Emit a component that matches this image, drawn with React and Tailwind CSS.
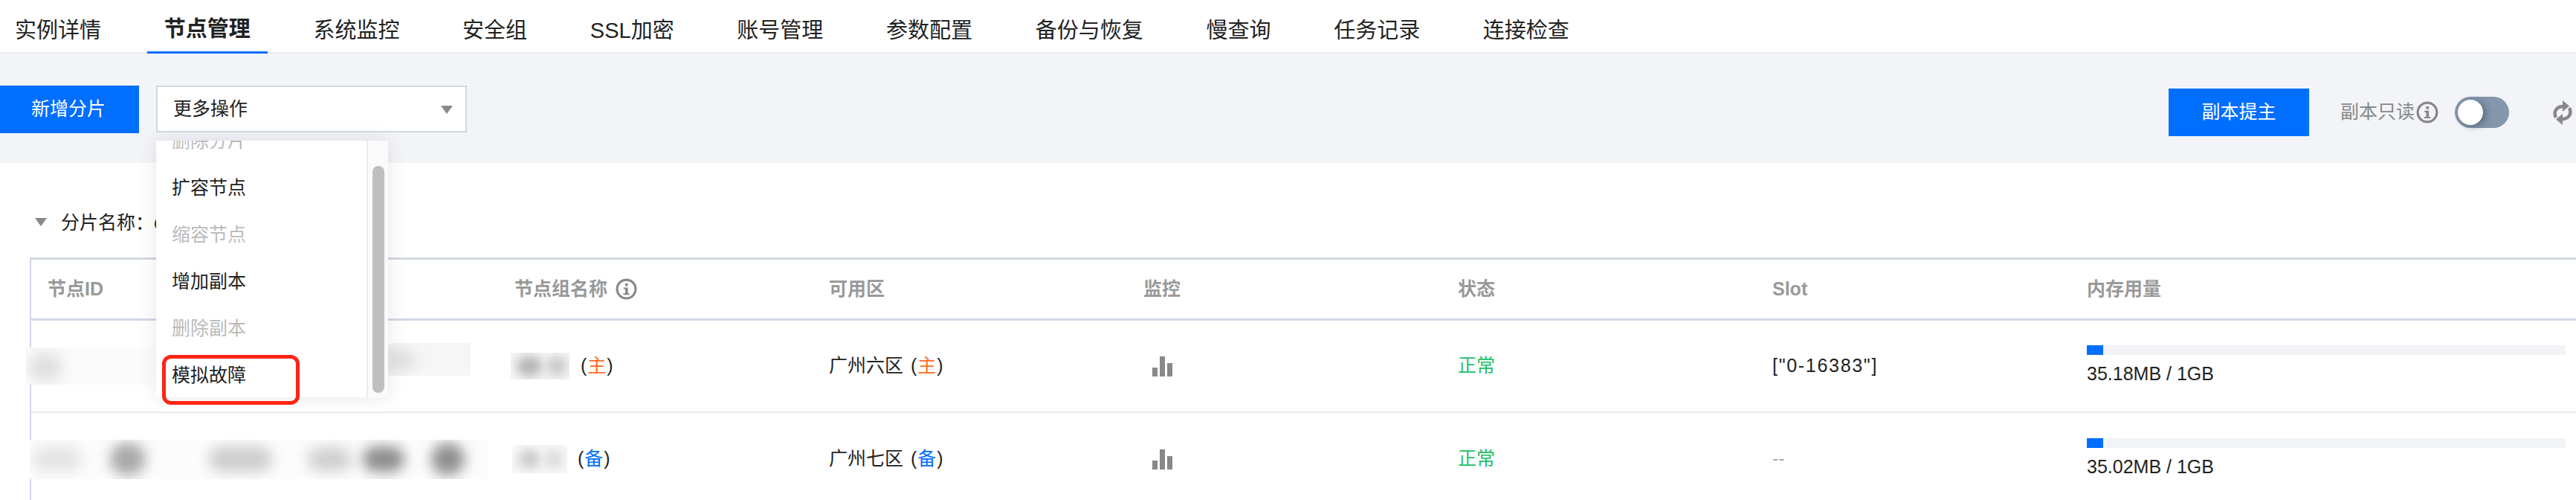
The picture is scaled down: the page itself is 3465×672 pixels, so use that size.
import React from "react";

const tabs = ["实例详情", "节点管理", "系统监控", "安全组", "SSL加密", "账号管理", "参数配置", "备份与恢复", "慢查询", "任务记录", "连接检查"];

function Info({ className }) {
  return (
    <svg viewBox="0 0 28 28" className={className} fill="none">
      <circle cx="14" cy="14" r="12" stroke="#888" strokeWidth="3" />
      <rect x="12.5" y="6.5" width="3.5" height="3.5" fill="#888" />
      <path d="M10.5 12h5.5v7.5h2v2h-8v-2h2.5v-5.5h-2z" fill="#888" />
    </svg>
  );
}

function Bars() {
  return (
    <svg viewBox="0 0 27 27" className="w-[27px] h-[27px] ml-[12px]" fill="#888">
      <rect x="0" y="15" width="7" height="12" />
      <rect x="10" y="0" width="7" height="27" />
      <rect x="20" y="9" width="7" height="18" />
    </svg>
  );
}

function Refresh() {
  return (
    <svg viewBox="0 0 26 33" className="w-[26px] h-[33px]" fill="none">
      <path d="M4 23 C0 15 5 8 14 8" stroke="#888" strokeWidth="4.5" />
      <path d="M13 0 L22 7.5 L13 15 Z" fill="#888" />
      <path d="M22 10 C26 18 21 25 12 25" stroke="#888" strokeWidth="4.5" />
      <path d="M13 18 L4 25.5 L13 33 Z" fill="#888" />
    </svg>
  );
}

function Tri({ className }) {
  return <div className={"w-0 h-0 border-l-[8px] border-r-[8px] border-t-[11px] border-l-transparent border-r-transparent border-t-[#888] " + (className || "")} />;
}

function Progress({ text }) {
  return (
    <div className="flex flex-col w-[644px]">
      <div className="h-[13px] bg-[#f2f3f7] w-full">
        <div className="h-full w-[22px] bg-[#006eff]" />
      </div>
      <div className="mt-[7px] leading-[36px]">{text}</div>
    </div>
  );
}

function DropItem({ children, disabled }) {
  return (
    <div className={"h-[63px] flex items-center pl-[21px] text-[25px] " + (disabled ? "text-[#bbbbbb]" : "text-[#222]")}>
      {children}
    </div>
  );
}

const rowGrid = "grid grid-cols-[628px_423px_423px_423px_423px_423px_1fr] items-center";
const headCell = "pl-[22px] text-[#999] font-bold";
const cell = "pl-[22px] flex items-center";

export default function App() {
  return (
    <div className="relative w-[3465px] h-[672px] overflow-hidden bg-white text-[25px] text-[#222] font-['Liberation_Sans','Noto_Sans_CJK_SC',sans-serif] flex flex-col">
      {/* tabs */}
      <div className="h-[72px] shrink-0 flex items-start gap-[38.7px] pl-0 border-b-[2px] border-[#e9ebf0] bg-white">
        {tabs.map((t, i) => (
          <div
            key={t}
            className={
              "h-[73px] px-[23px] flex items-center pt-[10px] text-[29px] whitespace-nowrap " +
              (i === 0 ? "-ml-[3px] " : "") +
              (i === 1 ? "font-bold border-b-[4px] border-[#006eff]" : "")
            }
          >
            {t}
          </div>
        ))}
      </div>

      {/* toolbar */}
      <div className="h-[147px] shrink-0 bg-[#f3f4f8] flex items-start justify-between pr-[5px]">
        <div className="flex items-start gap-[23px] mt-[43px]">
          <button className="w-[187px] h-[64px] bg-[#006eff] text-white text-[25px] pr-[3px]">新增分片</button>
          <div className="w-[418px] h-[63px] bg-white border-[2px] border-[#d2d8e2] flex items-center justify-between pl-[21px] pr-[17px]">
            <span>更多操作</span>
            <Tri className="mt-[2px]" />
          </div>
        </div>
        <div className="flex items-start mt-[47px]">
          <button className="w-[189px] h-[64px] bg-[#006eff] text-white text-[25px]">副本提主</button>
          <div className="flex items-center h-[64px] ml-[42px] text-[#888]">
            <span className="whitespace-nowrap">副本只读</span>
            <Info className="w-[30px] h-[30px] ml-[2px]" />
            <div className="w-[73px] h-[42px] ml-[22px] rounded-full bg-[#8497ac] flex items-center pl-[4px]">
              <div className="w-[34px] h-[34px] rounded-full bg-white shadow-[4px_2px_10px_rgba(40,50,70,0.45)]" />
            </div>
            <div className="ml-[59px]">
              <Refresh />
            </div>
          </div>
        </div>
      </div>

      {/* content */}
      <div className="flex-1 bg-white pl-[40px]">
        <div className="h-[127px] flex items-start pt-[65px] pl-[7px]">
          <Tri className="mt-[9px]" />
          <span className="ml-[19px] leading-[30px] whitespace-nowrap">分片名称：c</span>
        </div>
        <div className="border-l-[2px] border-t-[3px] border-[#d2d8e6]">
          <div className={rowGrid + " h-[82px] border-b-[3px] border-[#d2d8e6]"}>
            <div className={headCell}>节点ID</div>
            <div className={headCell + " flex items-center"}>
              <span>节点组名称</span>
              <Info className="w-[29px] h-[29px] ml-[11px]" />
            </div>
            <div className={headCell}>可用区</div>
            <div className={headCell}>监控</div>
            <div className={headCell}>状态</div>
            <div className={headCell}>Slot</div>
            <div className={headCell}>内存用量</div>
          </div>

          {/* row 1 */}
          <div className={rowGrid + " h-[124px] border-b-[2px] border-[#e7eaf0]"}>
            <div className="flex items-center h-full">
              <div className="-ml-[7px] w-[170px] h-[50px] bg-[#fbfbfb] overflow-hidden shrink-0">
                <div className="w-[44px] h-[36px] mt-[8px] ml-[4px] rounded-full bg-[#dcdcdc] blur-[10px]" />
              </div>
              <div className="ml-[312px] -mt-[18px] w-[116px] h-[44px] bg-[#f6f6f6] overflow-hidden shrink-0 rounded-tl-[12px]">
                <div className="w-[40px] h-[30px] mt-[8px] ml-[2px] rounded-full bg-[#e0e0e0] blur-[8px]" />
              </div>
            </div>
            <div className={cell}>
              <div className="-ml-[5px] w-[79px] h-[36px] bg-[#f6f6f6] overflow-hidden flex items-center gap-[6px] px-[8px] shrink-0">
                <div className="w-[34px] h-[26px] rounded-full bg-[#b4b4b4] blur-[7px] shrink-0" />
                <div className="w-[28px] h-[26px] rounded-full bg-[#c8c8c8] blur-[7px] shrink-0" />
              </div>
              <span className="ml-[15px]">(<span className="mx-[1px] text-[#ff6a22]">主</span>)</span>
            </div>
            <div className={cell}>
              广州六区 <span className="ml-[10px]">(<span className="mx-[1px] text-[#ff6a22]">主</span>)</span>
            </div>
            <div className={cell}><Bars /></div>
            <div className={cell + " text-[#22c065]"}>正常</div>
            <div className={cell + " tracking-[1.7px]"}>["0-16383"]</div>
            <div className={cell}><Progress text="35.18MB / 1GB" /></div>
          </div>

          {/* row 2 */}
          <div className={rowGrid + " h-[124px]"}>
            <div className="flex items-center h-full">
              <div className="-ml-[2px] w-[615px] h-[53px] bg-[#fcfcfc] overflow-hidden flex items-center shrink-0">
                <div className="ml-[4px] w-[66px] h-[34px] rounded-full bg-[#e4e4e4] blur-[9px] shrink-0" />
                <div className="ml-[38px] w-[48px] h-[44px] rounded-full bg-[#a8a8a8] blur-[9px] shrink-0" />
                <div className="ml-[85px] w-[85px] h-[34px] rounded-full bg-[#cdcdcd] blur-[9px] shrink-0" />
                <div className="ml-[48px] w-[59px] h-[32px] rounded-full bg-[#cfcfcf] blur-[9px] shrink-0" />
                <div className="ml-[15px] w-[56px] h-[34px] rounded-full bg-[#8c8c8c] blur-[9px] shrink-0" />
                <div className="ml-[36px] w-[45px] h-[44px] rounded-full bg-[#8f8f8f] blur-[9px] shrink-0" />
              </div>
            </div>
            <div className={cell}>
              <div className="-ml-[3px] w-[74px] h-[38px] bg-[#f8f8f8] overflow-hidden flex items-center gap-[6px] px-[8px] shrink-0">
                <div className="w-[30px] h-[26px] rounded-full bg-[#cccccc] blur-[7px] shrink-0" />
                <div className="w-[24px] h-[26px] rounded-full bg-[#dadada] blur-[7px] shrink-0" />
              </div>
              <span className="ml-[14px]">(<span className="mx-[1px] text-[#006eff]">备</span>)</span>
            </div>
            <div className={cell}>
              广州七区 <span className="ml-[10px]">(<span className="mx-[1px] text-[#006eff]">备</span>)</span>
            </div>
            <div className={cell}><Bars /></div>
            <div className={cell + " text-[#22c065]"}>正常</div>
            <div className={cell + " text-[#aaaaaa]"}>--</div>
            <div className={cell}><Progress text="35.02MB / 1GB" /></div>
          </div>
        </div>
      </div>

      {/* dropdown overlay */}
      <div className="absolute left-[210px] top-[189px] w-[312px] h-[345px] bg-white shadow-[0_0_24px_rgba(0,0,0,0.1)] flex overflow-hidden">
        <div className="flex-1 -mt-[31px]">
          <DropItem disabled>删除分片</DropItem>
          <DropItem>扩容节点</DropItem>
          <DropItem disabled>缩容节点</DropItem>
          <DropItem>增加副本</DropItem>
          <DropItem disabled>删除副本</DropItem>
          <DropItem>模拟故障</DropItem>
        </div>
        <div className="w-[29px] h-full bg-[#fafafa] border-l-[2px] border-[#ececec] pl-[6px] pt-[34px]">
          <div className="w-[16px] h-[305px] rounded-full bg-[#bfbfbf]" />
        </div>
      </div>

      {/* red highlight */}
      <div className="absolute left-[218px] top-[477px] w-[185px] h-[67px] rounded-[12px] border-[5px] border-[#ff2414]" />
    </div>
  );
}
